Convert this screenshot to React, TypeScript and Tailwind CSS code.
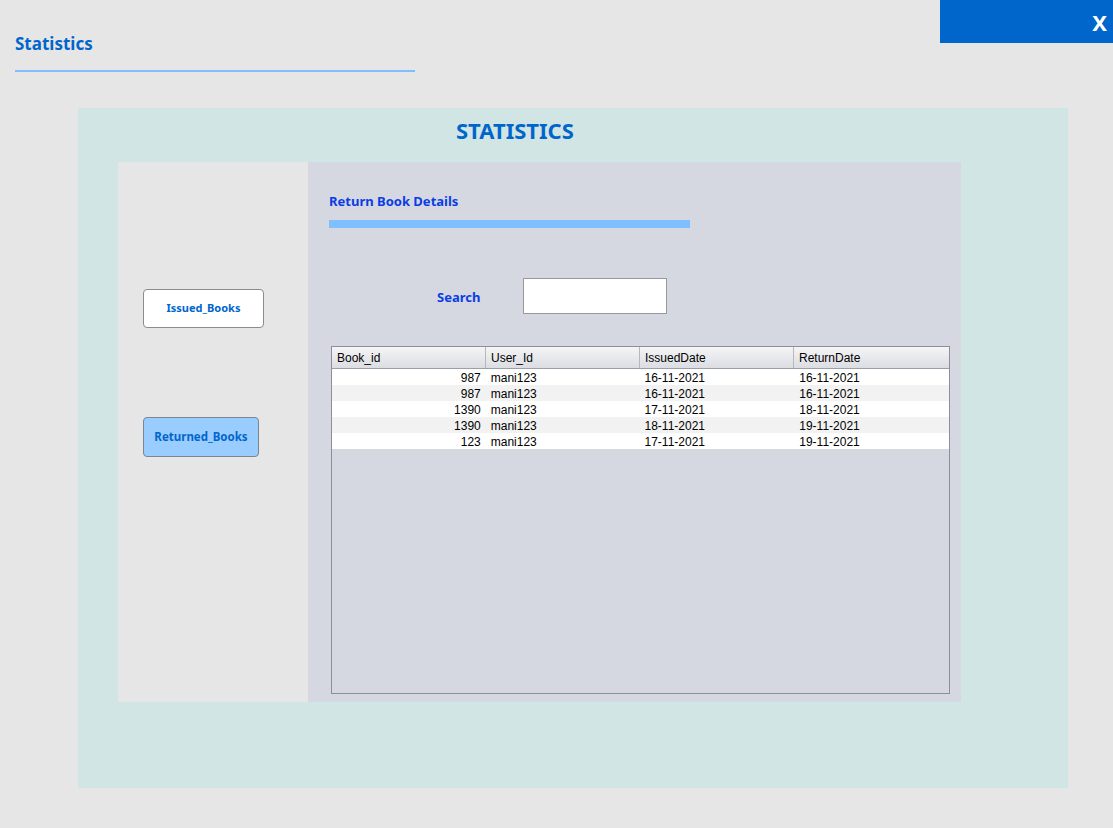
import React from "react";

type Row = {
  bookId: string;
  userId: string;
  issued: string;
  returned: string;
};

const rows: Row[] = [
  { bookId: "987", userId: "mani123", issued: "16-11-2021", returned: "16-11-2021" },
  { bookId: "987", userId: "mani123", issued: "16-11-2021", returned: "16-11-2021" },
  { bookId: "1390", userId: "mani123", issued: "17-11-2021", returned: "18-11-2021" },
  { bookId: "1390", userId: "mani123", issued: "18-11-2021", returned: "19-11-2021" },
  { bookId: "123", userId: "mani123", issued: "17-11-2021", returned: "19-11-2021" },
];

const uiFont = { fontFamily: '"Noto Sans", "Open Sans", sans-serif' };
const tableFont = { fontFamily: '"Liberation Sans", Arial, sans-serif' };

export default function App() {
  return (
    <main className="w-[1113px] h-[828px] bg-[#e6e6e6] flex flex-col overflow-hidden" style={uiFont}>
      {/* Header */}
      <div className="flex justify-between h-[108px]">
        <div className="pl-[15px] pt-[32px]">
          <h1 className="text-[17px] leading-[24px] font-bold text-[#0066cc]">Statistics</h1>
          <div className="mt-[14px] w-[400px] h-[2px] bg-[#80bfff]" />
        </div>
        <div className="w-[173px] h-[43px] bg-[#0066cc] flex items-center justify-end pr-[6px]">
          <span className="text-white text-[22px] font-bold leading-none">X</span>
        </div>
      </div>

      {/* Main panel */}
      <div className="ml-[78px] w-[990px] h-[680px] bg-[#d1e5e4] flex flex-col">
        <div className="h-[54px] pl-[378px] pt-[7px]">
          <h2 className="text-[22px] leading-[30px] font-bold text-[#0066cc]">STATISTICS</h2>
        </div>

        <div className="ml-[40px] w-[843px] h-[540px] flex">
          {/* Left panel */}
          <div className="w-[190px] h-full bg-[#e6e6e6] flex flex-col pl-[25px] pt-[127px]">
            <button className="w-[121px] h-[39px] bg-white border border-[#8c8c8c] rounded-[4px] text-[11px] font-bold text-[#0066cc]">
              Issued_Books
            </button>
            <button className="mt-[89px] w-[116px] h-[40px] bg-[#99ccff] border border-[#7a8590] rounded-[4px] text-[11.5px] font-bold text-[#0066cc]">
              Returned_Books
            </button>
          </div>

          {/* Right panel */}
          <div className="w-[653px] h-full bg-[#d5d8e0] flex flex-col pl-[21px] pt-[30px]">
            <h3 className="text-[13px] leading-[18px] font-bold text-[#0a3de6]">Return Book Details</h3>
            <div className="mt-[10px] w-[361px] h-[8px] bg-[#80bfff]" />

            <div className="mt-[50px] flex items-center">
              <span className="ml-[108px] w-[86px] pt-[4px] text-[13px] font-bold text-[#0a3de6]">Search</span>
              <input className="w-[144px] h-[36px] bg-white border border-[#999999] outline-none" />
            </div>

            <div
              className="mt-[32px] ml-[2px] w-[619px] h-[348px] border border-[#8a8f99] flex flex-col text-[12px] text-black"
              style={tableFont}
            >
              <div className="flex h-[22px] border-b border-[#9aa0a8] bg-gradient-to-b from-[#f5f5f7] to-[#dcdde2]">
                {["Book_id", "User_Id", "IssuedDate", "ReturnDate"].map((h, i) => (
                  <div
                    key={h}
                    className={`${i === 3 ? "w-[155px]" : "w-[154px]"} h-full flex items-center pl-[5px] ${
                      i < 3 ? "border-r border-[#b5b8c0]" : ""
                    }`}
                  >
                    {h}
                  </div>
                ))}
              </div>
              {rows.map((r, i) => (
                <div
                  key={i}
                  className={`flex h-[16px] pt-[1px] leading-[16px] ${i % 2 === 0 ? "bg-white" : "bg-[#f2f2f2]"}`}
                >
                  <div className="w-[154px] text-right pr-[5px]">{r.bookId}</div>
                  <div className="w-[154px] pl-[5px]">{r.userId}</div>
                  <div className="w-[155px] pl-[5px]">{r.issued}</div>
                  <div className="w-[155px] pl-[5px]">{r.returned}</div>
                </div>
              ))}
            </div>
          </div>
        </div>
      </div>
    </main>
  );
}
